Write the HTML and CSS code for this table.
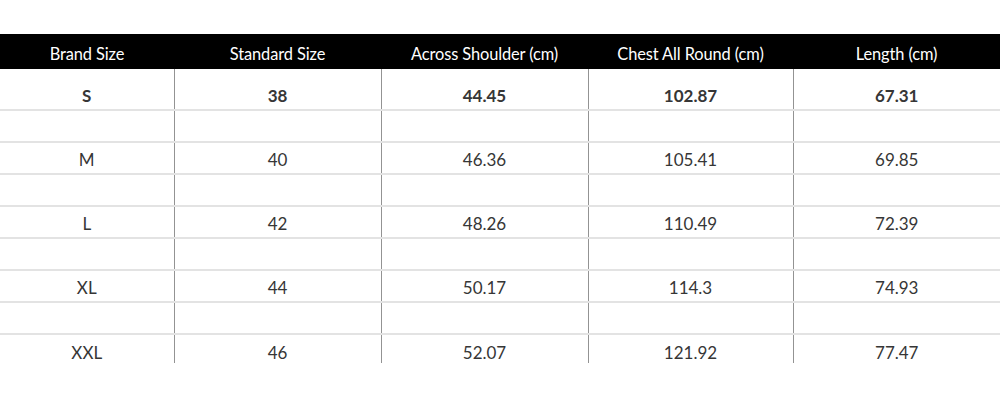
FILE: index.html
```html
<!DOCTYPE html>
<html>
<head>
<meta charset="utf-8">
<link rel="stylesheet" href="styles.css">
</head>
<body>
<div class="page">
<table class="size-table">
  <colgroup>
    <col class="c1"><col class="c2"><col class="c3"><col class="c4"><col class="c5">
  </colgroup>
  <thead>
    <tr>
      <th>Brand Size</th>
      <th>Standard Size</th>
      <th>Across Shoulder (cm)</th>
      <th>Chest All Round (cm)</th>
      <th>Length (cm)</th>
    </tr>
  </thead>
  <tbody>
    <tr class="data first"><td>S</td><td>38</td><td>44.45</td><td>102.87</td><td>67.31</td></tr>
    <tr class="gap"><td></td><td></td><td></td><td></td><td></td></tr>
    <tr class="data"><td>M</td><td>40</td><td>46.36</td><td>105.41</td><td>69.85</td></tr>
    <tr class="gap"><td></td><td></td><td></td><td></td><td></td></tr>
    <tr class="data"><td>L</td><td>42</td><td>48.26</td><td>110.49</td><td>72.39</td></tr>
    <tr class="gap"><td></td><td></td><td></td><td></td><td></td></tr>
    <tr class="data"><td>XL</td><td>44</td><td>50.17</td><td>114.3</td><td>74.93</td></tr>
    <tr class="gap"><td></td><td></td><td></td><td></td><td></td></tr>
    <tr class="data last"><td>XXL</td><td>46</td><td>52.07</td><td>121.92</td><td>77.47</td></tr>
  </tbody>
</table>
</div>
</body>
</html>
```

FILE: styles.css
```css
html, body {
  margin: 0;
  padding: 0;
  background: #ffffff;
}

.page {
  padding-top: 34px;
  width: 1000px;
}

.size-table {
  width: 1000px;
  table-layout: fixed;
  border-collapse: collapse;
  font-family: Lato, "Liberation Sans", sans-serif;
  color: #363636;
}

.c1 { width: 174px; }
.c2 { width: 207px; }
.c3 { width: 207px; }
.c4 { width: 205px; }
.c5 { width: 207px; }

.size-table th {
  background: #000000;
  color: #ffffff;
  font-weight: 400;
  font-size: 16.4px;
  height: 35px;
  padding: 3px 0 0 0;
  box-sizing: border-box;
  text-align: center;
  vertical-align: middle;
  letter-spacing: -0.1px;
}

.size-table td {
  padding: 0;
  text-align: center;
  vertical-align: middle;
  font-size: 17px;
  border-bottom: 2px solid #e3e3e3;
  border-left: 1px solid #939393;
  box-sizing: border-box;
}

.size-table td:first-child {
  border-left: none;
}

.size-table tr.data td {
  height: 32px;
  padding-top: 2px;
}

.size-table tr.gap td {
  height: 32px;
}

.size-table tr.first td {
  height: 41px;
  font-weight: 700;
  padding-top: 13px;
}

.size-table tr.last td {
  height: 29px;
  border-bottom: none;
  padding-top: 6px;
}
```
